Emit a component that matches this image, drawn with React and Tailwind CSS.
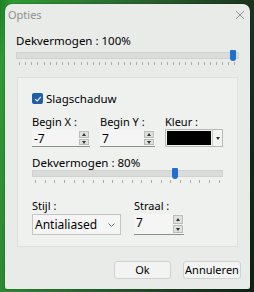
import React from 'react'

const font = { fontFamily: '"Noto Sans", "Open Sans", sans-serif' }

// Small tick row under a slider
const Ticks = ({ count }) => (
  <div className="flex justify-between px-[3px] mt-[3px]">
    {Array.from({ length: count }).map((_, i) => (
      <div key={i} className="w-px h-[3px] bg-[#a9aca9]" />
    ))}
  </div>
)

const Slider = ({ pct, ticks }) => (
  <div>
    <div className="relative h-[7px] bg-[#d9dcd9] border border-[#cfd2cf]">
      <div
        className="absolute top-[-3px] w-[6px] h-[11px] bg-[#1f6fd1] rounded-b-[3px] rounded-t-[1px]"
        style={{ left: `calc(${pct}% - 8px)` }}
      />
    </div>
    <Ticks count={ticks} />
  </div>
)

const Spin = ({ value, className }) => (
  <div className={`flex h-[17px] bg-[#f4f5f4] border-b border-[#8c8f8c] ${className}`}>
    <div className="flex-1 pl-[2px] text-[12px] leading-[17px] text-black">{value}</div>
    <div className="flex flex-col gap-px w-[10px] my-[1px] mr-[1px]">
      <div className="flex-1 bg-[#dfe1df] border border-[#b9bcb9] flex items-center justify-center">
        <div className="w-0 h-0 border-l-[2px] border-r-[2px] border-b-[3px] border-l-transparent border-r-transparent border-b-[#333]" />
      </div>
      <div className="flex-1 bg-[#dfe1df] border border-[#b9bcb9] flex items-center justify-center">
        <div className="w-0 h-0 border-l-[2px] border-r-[2px] border-t-[3px] border-l-transparent border-r-transparent border-t-[#333]" />
      </div>
    </div>
  </div>
)

export default function App() {
  return (
    <div
      className="w-[254px] h-[292px] bg-[linear-gradient(100deg,#1f7d27_0%,#2f9a33_4%,#2a6b30_40%,#1e3d24_75%,#0f1f16_100%)] pl-[5px] pt-[4px] pr-[4px] pb-[3px]"
      style={font}
    >
      <div className="h-full bg-[#e8ebe8] rounded-t-[7px] rounded-b-[2px] flex flex-col shadow-[0_0_2px_rgba(0,0,0,0.4)]">
        {/* Title bar */}
        <div className="flex items-center justify-between h-[20px] pl-[3px] pr-[5px] pt-[2px]">
          <span className="text-[11px] text-[#8d908d]">Opties</span>
          <svg width="10" height="10" viewBox="0 0 10 10" className="stroke-[#8d908d]">
            <path d="M1 1 L9 9 M9 1 L1 9" strokeWidth="1" />
          </svg>
        </div>

        <div className="px-[11px] pt-[10px]">
          <div className="text-[11.5px] leading-[14px] text-black mb-[4px]">Dekvermogen : 100%</div>
          <Slider pct={100} ticks={36} />
        </div>

        {/* Drop shadow group */}
        <div className="mx-[12px] mt-[12px] h-[170px] bg-[#eff1ef] border border-[#dde0dd] px-[14px] pt-[12px]">
          <label className="flex items-center gap-[3px]">
            <span className="w-[11px] h-[11px] rounded-[2px] bg-[#1f5fa8] flex items-center justify-center">
              <svg width="8" height="8" viewBox="0 0 8 8">
                <path d="M1.2 4.2 L3.2 6 L6.8 1.8" fill="none" stroke="#fff" strokeWidth="1.1" />
              </svg>
            </span>
            <span className="text-[11.5px] text-black">Slagschaduw</span>
          </label>

          <div className="flex mt-[8px]">
            <div className="w-[58px]">
              <div className="text-[11px] leading-[14px] text-black mb-[1px]">Begin X :</div>
              <Spin value="-7" />
            </div>
            <div className="w-[55px] ml-[10px]">
              <div className="text-[11px] leading-[14px] text-black mb-[1px]">Begin Y :</div>
              <Spin value="7" />
            </div>
            <div className="ml-[10px]">
              <div className="text-[11px] leading-[14px] text-black mb-0">Kleur :</div>
              <div className="flex w-[58px] h-[18px] border border-[#b7bab7] bg-[#f2f3f2]">
                <div className="w-[44px] m-[1px] bg-black" />
                <div className="flex-1 flex items-center justify-center border-l border-[#c6c9c6]">
                  <div className="w-0 h-0 border-l-[2px] border-r-[2px] border-t-[3px] border-l-transparent border-r-transparent border-t-[#333]" />
                </div>
              </div>
            </div>
          </div>

          <div className="mt-[9px] w-[191px]">
            <div className="text-[11.5px] leading-[14px] text-black mb-0">Dekvermogen : 80%</div>
            <Slider pct={78} ticks={20} />
          </div>

          <div className="flex mt-[16px]">
            <div className="w-[89px]">
              <div className="text-[11px] leading-[14px] text-black mb-[1px]">Stijl :</div>
              <div className="flex items-center justify-between h-[21px] border border-[#c2c5c2] bg-[#f4f5f4] pl-[2px] pr-[5px]">
                <span className="text-[12px] text-black">Antialiased</span>
                <svg width="7" height="4" viewBox="0 0 7 4">
                  <path d="M0.5 0.5 L3.5 3.5 L6.5 0.5" fill="none" stroke="#666" strokeWidth="0.9" />
                </svg>
              </div>
            </div>
            <div className="w-[50px] ml-[13px]">
              <div className="text-[11px] leading-[14px] text-black mb-[1px]">Straal :</div>
              <Spin value="7" className="h-[21px]" />
            </div>
          </div>
        </div>

        {/* Buttons */}
        <div className="flex justify-end gap-[12px] pr-[9px] mt-[14px]">
          <button className="w-[57px] h-[18px] bg-[#f2f3f2] border border-[#cfd2cf] rounded-[3px] text-[11px] text-black">Ok</button>
          <button className="w-[58px] h-[18px] bg-[#f2f3f2] border border-[#cfd2cf] rounded-[3px] text-[11px] text-black">Annuleren</button>
        </div>
      </div>
    </div>
  )
}
